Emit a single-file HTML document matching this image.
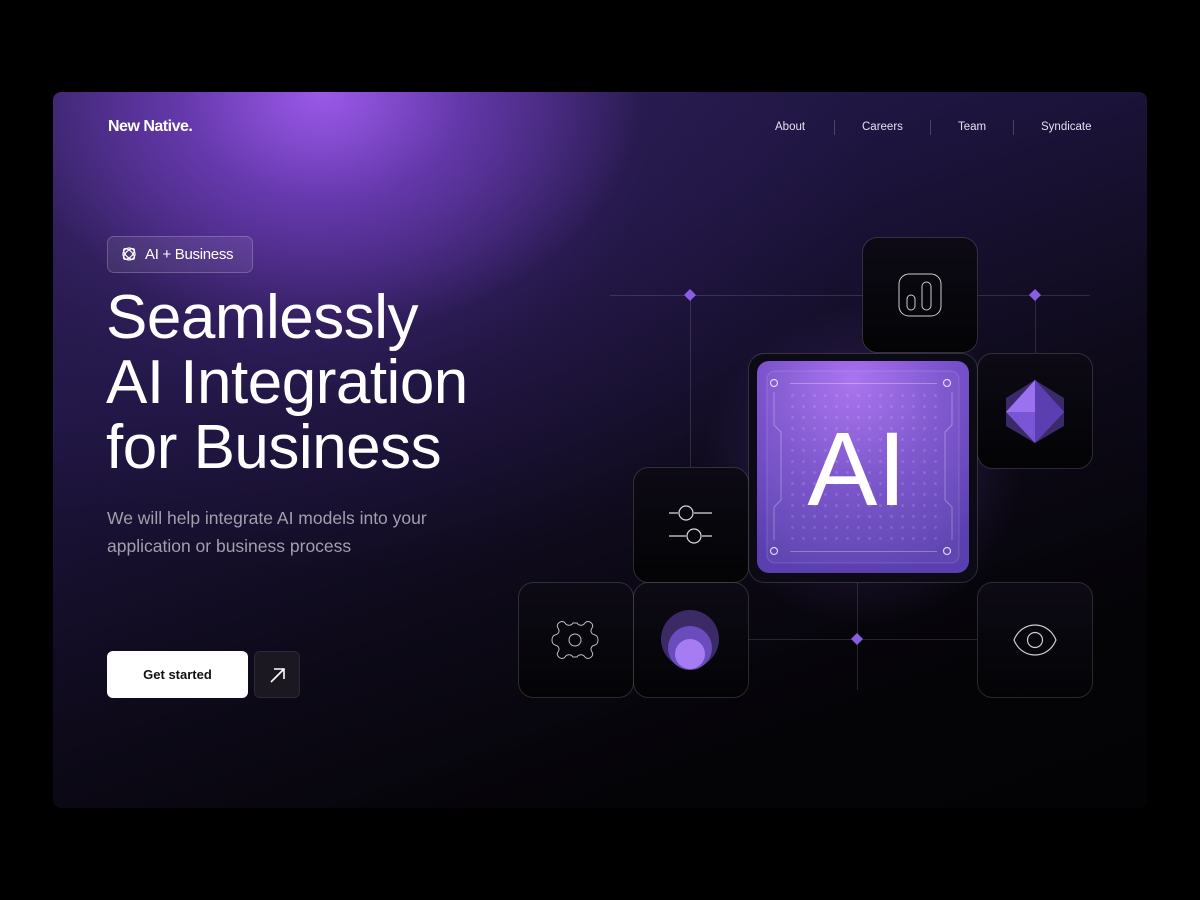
<!DOCTYPE html>
<html><head><meta charset="utf-8"><style>
*{margin:0;padding:0;box-sizing:border-box}
body{width:1200px;height:900px;background:#000;position:relative;overflow:hidden;font-family:"Liberation Sans",sans-serif;color:#fff}
.card{position:absolute;left:53px;top:92px;width:1094px;height:716px;border-radius:8px;overflow:hidden;
background:radial-gradient(ellipse 320px 240px at 270px 0px,rgba(165,95,245,0.9),rgba(130,70,215,0.55) 45%,rgba(90,50,160,0) 100%),
radial-gradient(ellipse 560px 420px at 260px 60px,rgba(110,60,190,0.5),rgba(60,35,110,0.22) 60%,rgba(40,25,70,0) 100%),
linear-gradient(160deg,#2c2055 0%,#1e1540 30%,#0e0a1a 58%,#040306 82%,#030305 100%);}
.abs{position:absolute}
.logo{left:108px;top:118px;font-size:16px;font-weight:bold;letter-spacing:-0.5px}
.nav{top:121px;font-size:11.5px;color:#e6e0f0}
.sep{top:120px;width:1px;height:15px;background:rgba(255,255,255,0.2)}
.tag{left:107px;top:236px;width:146px;height:37px;border:1px solid rgba(255,255,255,0.2);border-radius:7px;background:rgba(255,255,255,0.08);font-size:15px;line-height:35px;padding-left:37px;letter-spacing:-0.3px}
h1{position:absolute;left:106px;top:285px;font-size:62px;line-height:65px;font-weight:normal;letter-spacing:-0.5px}
.sub{left:107px;top:504px;font-size:17.5px;line-height:28px;color:#a29fae}
.btn{left:107px;top:651px;width:141px;height:47px;background:#fff;border-radius:6px;color:#111;font-size:13px;font-weight:bold;text-align:center;line-height:47px}
.arr{left:254px;top:651px;width:46px;height:47px;background:#1b1822;border:1px solid #2c2935;border-radius:6px}
</style></head><body>
<div class="card"></div>
<div class="abs logo">New Native.</div>
<div class="abs nav" style="left:775px">About</div>
<div class="abs sep" style="left:834px"></div>
<div class="abs nav" style="left:862px">Careers</div>
<div class="abs sep" style="left:930px"></div>
<div class="abs nav" style="left:958px">Team</div>
<div class="abs sep" style="left:1013px"></div>
<div class="abs nav" style="left:1041px">Syndicate</div>
<div class="abs tag">AI + Business</div>
<svg class="abs" style="left:121px;top:246px" width="16" height="16" viewBox="0 0 16 16" fill="none" stroke="#fff" stroke-width="1.2"><circle cx="8" cy="8" r="6"/><ellipse cx="8" cy="8" rx="7" ry="3.2" transform="rotate(45 8 8)"/><ellipse cx="8" cy="8" rx="7" ry="3.2" transform="rotate(-45 8 8)"/></svg>
<h1>Seamlessly<br>AI Integration<br>for Business</h1>
<div class="abs sub">We will help integrate AI models into your<br>application or business process</div>
<div class="abs btn">Get started</div>
<div class="abs arr"><svg width="46" height="47" viewBox="0 0 46 47" fill="none" stroke="#fff" stroke-width="1.6"><path d="M16 30 L29 17 M19 17 H29 V27"/></svg></div>

<svg class="abs" style="left:0;top:0" width="1200" height="900" viewBox="0 0 1200 900" fill="none">
<defs>
<radialGradient id="chip" cx="0.45" cy="0.1" r="0.9"><stop offset="0" stop-color="#a870ee"/><stop offset="0.5" stop-color="#7a52cc"/><stop offset="1" stop-color="#5a3fb0"/></radialGradient>
<radialGradient id="glow" cx="0.5" cy="0.5" r="0.5"><stop offset="0" stop-color="#8a5ae0" stop-opacity="0.3"/><stop offset="1" stop-color="#8a5ae0" stop-opacity="0"/></radialGradient>
<pattern id="dots" x="791" y="394" width="11" height="11" patternUnits="userSpaceOnUse"><circle cx="1.5" cy="1.5" r="1.5" fill="#fff" fill-opacity="0.13"/></pattern>
<linearGradient id="tile" x1="0" y1="0" x2="0" y2="1"><stop offset="0" stop-color="#0d0a15"/><stop offset="1" stop-color="#030305"/></linearGradient>
</defs>
<g stroke="#fff" stroke-opacity="0.13" stroke-width="1">
<path d="M610 295.5 H1090"/>
<path d="M690.5 295 V467"/><path d="M1035.5 295 V353"/>
<path d="M748 639.5 H977"/><path d="M857.5 582 V690"/>
</g>
<circle cx="862" cy="465" r="160" fill="url(#glow)"/>
<g stroke="#fff" stroke-opacity="0.15" fill="url(#tile)">
<rect x="862.5" y="237.5" width="115" height="115" rx="15"/>
<rect x="977.5" y="353.5" width="115" height="115" rx="15"/>
<rect x="748.5" y="353.5" width="229" height="229" rx="16" fill="#0c0a14"/>
<rect x="633.5" y="467.5" width="115" height="115" rx="15"/>
<rect x="518.5" y="582.5" width="115" height="115" rx="15"/>
<rect x="633.5" y="582.5" width="115" height="115" rx="15"/>
<rect x="977.5" y="582.5" width="115" height="115" rx="15"/>
</g>
<g fill="#8a5ee0"><path d="M690 289 L696 295 L690 301 L684 295Z"/><path d="M1035 289 L1041 295 L1035 301 L1029 295Z"/><path d="M857 633 L863 639 L857 645 L851 639Z"/></g>
<rect x="757" y="361" width="212" height="212" rx="12" fill="url(#chip)"/>
<rect x="767" y="371" width="192" height="192" rx="8" fill="#fff" fill-opacity="0.04" stroke="#fff" stroke-opacity="0.15"/>
<rect x="788" y="391" width="152" height="152" fill="url(#dots)"/>
<g stroke="#fff" stroke-opacity="0.3" stroke-width="1">
<path d="M790 383.5 H937 M790 551.5 H937"/>
<path d="M774 392 V425 L781 432 V500 L774 507 V540 M952 392 V425 L945 432 V500 L952 507 V540"/>
</g>
<g stroke="#fff" stroke-opacity="0.75" stroke-width="1.2"><circle cx="774" cy="383" r="3.5"/><circle cx="947" cy="383" r="3.5"/><circle cx="774" cy="551" r="3.5"/><circle cx="947" cy="551" r="3.5"/></g>
<text x="857" y="505" text-anchor="middle" font-family="Liberation Sans,sans-serif" font-size="105" fill="#fff">AI</text>
<g stroke="#fff" stroke-opacity="0.8" stroke-width="1"><rect x="899" y="274" width="42" height="42" rx="10"/><rect x="907" y="295" width="8" height="15" rx="4"/><rect x="922" y="282" width="9" height="28" rx="4.5"/></g>
<path d="M1035 380 L1064 398 V426 L1035 443 L1006 426 V398Z" fill="#3a2a6a"/>
<path d="M1035 380 L1064 412 L1035 443 L1006 412Z" fill="#7a55d6"/>
<path d="M1035 380 L1064 412 L1035 443Z" fill="#5b3eb0"/>
<path d="M1035 380 L1006 412 L1035 412Z" fill="#9a72f0"/>
<g stroke="#fff" stroke-opacity="0.85" stroke-width="1.2"><path d="M669 513 H678 M694 513 H712 M669 536 H686 M702 536 H712"/><circle cx="686" cy="513" r="7"/><circle cx="694" cy="536" r="7"/></g>
<g stroke="#fff" stroke-opacity="0.75" stroke-width="1" transform="translate(575 640)">
<path d="M-5 -20 C-4 -24 4 -24 5 -20 C6 -16 9 -15 12 -17 C16 -20 21 -13 17 -10 C14 -8 14 -4 17 -2 L17 2 C14 4 14 8 17 10 C21 13 16 20 12 17 C9 15 6 16 5 20 C4 24 -4 24 -5 20 C-6 16 -9 15 -12 17 C-16 20 -21 13 -17 10 C-14 8 -14 4 -17 2 L-17 -2 C-14 -4 -14 -8 -17 -10 C-21 -13 -16 -20 -12 -17 C-9 -15 -6 -16 -5 -20Z" transform="rotate(90)"/>
<circle r="6"/></g>
<circle cx="690" cy="639" r="29" fill="#3b2a66"/>
<circle cx="690" cy="648" r="22" fill="#6a4cbc"/>
<circle cx="690" cy="654" r="15" fill="#a57cf2"/>
<g stroke="#fff" stroke-opacity="0.8" stroke-width="1.2"><path d="M1014 640 C1022 620 1048 620 1056 640 C1048 660 1022 660 1014 640Z"/><circle cx="1035" cy="640" r="7.5"/></g>
</svg>
</body></html>
